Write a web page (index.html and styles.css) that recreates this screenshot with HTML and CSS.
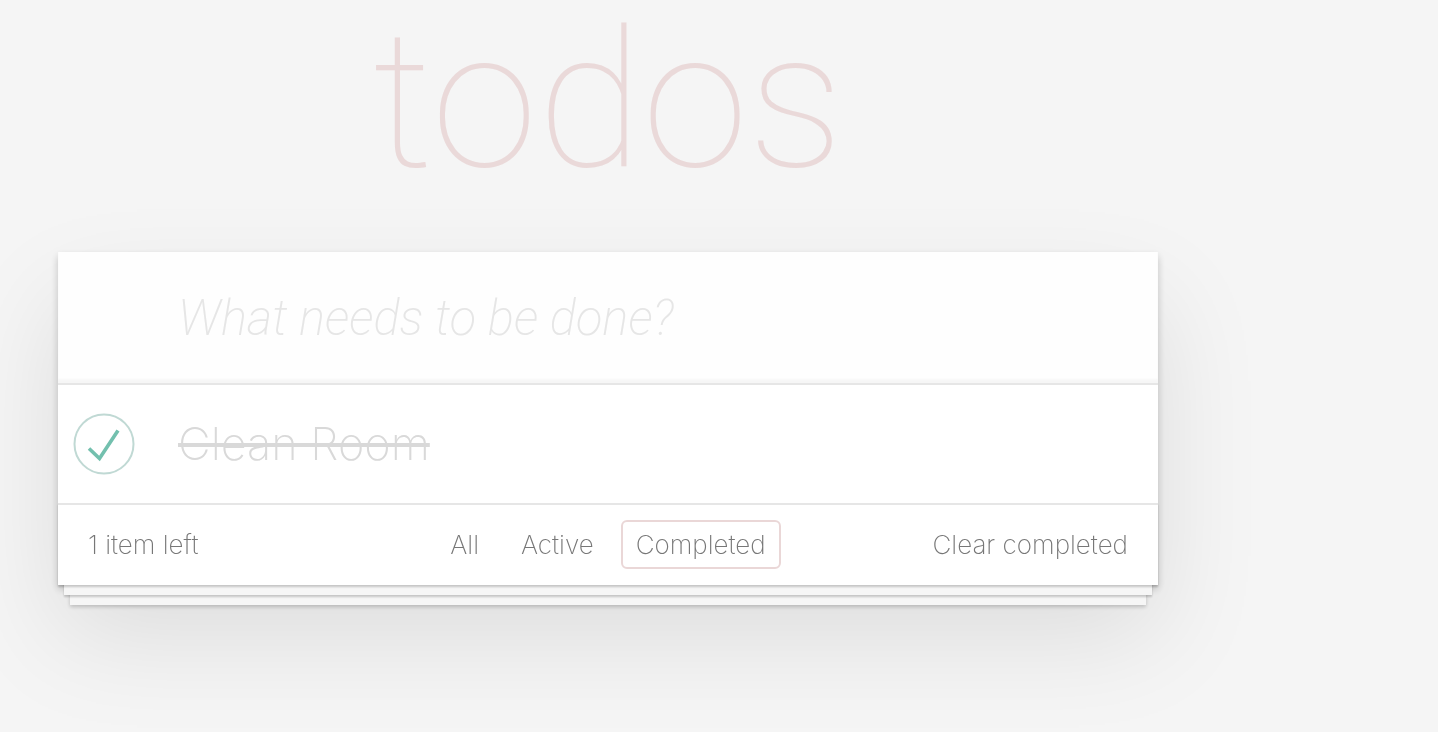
FILE: index.html
```html
<!DOCTYPE html>
<html lang="en">
<head>
<meta charset="utf-8">
<meta name="viewport" content="width=device-width, initial-scale=1">
<title>todos</title>
<link rel="stylesheet" href="styles.css">
</head>
<body>
<main class="page">
  <h1 class="title">todos</h1>
  <section class="card">
    <input class="new-todo" type="text" placeholder="What needs to be done?" aria-label="New todo">
    <ul class="list">
      <li class="item">
        <span class="tick">
          <input class="toggle" type="checkbox" id="todo-1" checked>
          <svg class="mark" viewBox="0 0 64 64" aria-hidden="true">
            <circle cx="32" cy="32" r="29.5" fill="none" stroke="#c0d9d4" stroke-width="2"/>
            <path d="M17 36.5 27.5 46.5 46 18.5" fill="none" stroke="#73c0ae" stroke-width="3.6"/>
          </svg>
        </span>
        <label class="label" for="todo-1">Clean Room</label>
      </li>
    </ul>
    <footer class="footer">
      <span class="count">1 item left</span>
      <nav class="filters">
        <a class="filter" href="#all">All</a>
        <a class="filter" href="#active">Active</a>
        <a class="filter selected" href="#completed">Completed</a>
      </nav>
      <button class="clear" type="button">Clear completed</button>
    </footer>
  </section>
</main>
</body>
</html>
```
FILE: styles.css
```css
* { box-sizing: border-box; }

body {
  margin: 0;
  background: #f5f5f5;
  color: #777;
  font-family: Inter, "Helvetica Neue", sans-serif;
  font-weight: 200;
}

.page {
  max-width: 1158px;
  min-height: 100vh;
  padding-left: 58px;
  will-change: transform;
}

.title {
  height: 252px;
  margin: 0;
  color: #ead9d9;
  font-family: Roboto, sans-serif;
  font-size: 192px;
  font-weight: 100;
  line-height: 202px;
  text-align: center;
}

.card {
  background: #fff;
  box-shadow: 0 4px 8px rgba(0, 0, 0, 0.2), 0 50px 100px rgba(0, 0, 0, 0.1);
}

.new-todo {
  display: block;
  width: 100%;
  height: 131px;
  padding: 2px 32px 0 120px;
  border: 0;
  background: #fefefe;
  box-shadow: inset 0 -4px 2px rgba(0, 0, 0, 0.03);
  font: inherit;
  font-family: Roboto, sans-serif;
  font-size: 49px;
  outline: 0;
}

.new-todo::placeholder {
  color: #e6e6e6;
  font-style: italic;
  opacity: 1;
}

.list {
  margin: 0;
  padding: 0;
  border-top: 2px solid #e6e6e6;
  list-style: none;
}

.item {
  display: flex;
  align-items: center;
  height: 118px;
}

.tick {
  position: relative;
  width: 64px;
  height: 64px;
  margin: 0 42px 0 14px;
}

.toggle {
  width: 100%;
  height: 100%;
  margin: 0;
  appearance: none;
}

.mark {
  position: absolute;
  inset: 0;
  pointer-events: none;
}

.label {
  color: #d9d9d9;
  font-size: 45px;
  line-height: 58px;
  text-decoration: line-through 4px;
}

.footer {
  display: grid;
  grid-template-columns: 1fr auto 1fr;
  align-items: center;
  height: 82px;
  padding: 0 30px 2px;
  border-top: 2px solid #e6e6e6;
  box-shadow: 0 2px 2px rgba(0, 0, 0, 0.2), 0 16px 0 -6px #f6f6f6, 0 18px 2px -6px rgba(0, 0, 0, 0.2), 0 32px 0 -12px #f6f6f6, 0 34px 4px -12px rgba(0, 0, 0, 0.2);
  font-size: 26px;
}

.filters {
  display: flex;
  gap: 12px;
}

.filter {
  padding: 6px 13px;
  border: 2px solid transparent;
  border-radius: 6px;
  color: inherit;
  line-height: 33px;
  text-decoration: none;
}

.filter.selected { border-color: #ead7d7; }

.clear {
  justify-self: end;
  padding: 0;
  border: 0;
  background: none;
  color: inherit;
  font: inherit;
}
```
